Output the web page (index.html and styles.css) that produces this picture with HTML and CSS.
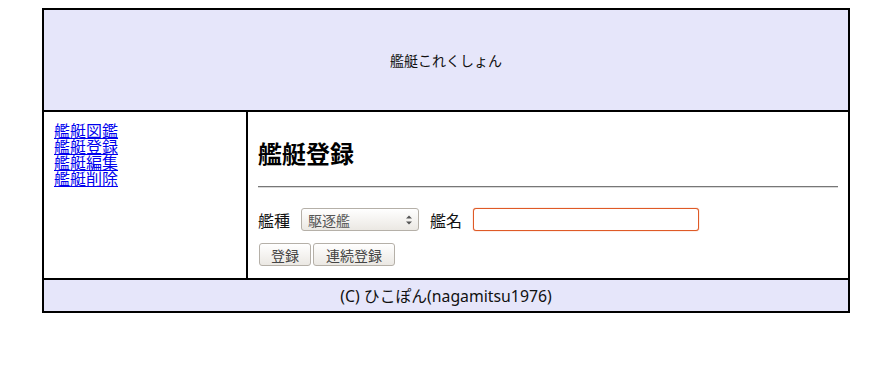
FILE: index.html
```html
<!DOCTYPE html>
<html lang="ja">
<head>
<meta charset="utf-8">
<title>艦艇これくしょん</title>
<link rel="stylesheet" href="styles.css">
</head>
<body>
<div class="page">
  <header class="header">艦艇これくしょん</header>
  <div class="middle">
    <nav class="nav">
      <a href="#">艦艇図鑑</a>
      <a href="#">艦艇登録</a>
      <a href="#">艦艇編集</a>
      <a href="#">艦艇削除</a>
    </nav>
    <main class="main">
      <h2 class="title">艦艇登録</h2>
      <hr class="rule">
      <form class="form">
        <div class="row">
          <label class="label" for="kind">艦種</label>
          <span class="select-wrap">
            <select id="kind" class="select">
              <option>駆逐艦</option>
              <option>軽巡洋艦</option>
              <option>重巡洋艦</option>
              <option>戦艦</option>
              <option>空母</option>
            </select>
            <svg class="arrows" width="8" height="12" viewBox="0 0 8 12"><path d="M1 4.5 L4 1.5 L7 4.5 Z M1 7.5 L4 10.5 L7 7.5 Z" fill="#555"/></svg>
          </span>
          <label class="label" for="name">艦名</label>
          <input id="name" class="input" type="text">
        </div>
        <div class="buttons">
          <button type="button" class="btn btn-1">登録</button>
          <button type="button" class="btn btn-2">連続登録</button>
        </div>
      </form>
    </main>
  </div>
  <footer class="footer">(C) ひこぽん(nagamitsu1976)</footer>
</div>
</body>
</html>
```
FILE: styles.css
```css
html, body {
  margin: 0;
  padding: 0;
  background: #fff;
}
body {
  padding-top: 8px;
  font-family: "Noto Sans CJK JP", "Noto Sans", sans-serif;
  color: #000;
}
.page {
  width: 804px;
  margin: 0 0 0 42px;
  border: 2px solid #000;
}
.header {
  height: 100px;
  background: #e6e6fa;
  border-bottom: 2px solid #000;
  display: flex;
  align-items: center;
  justify-content: center;
  font-size: 14px;
  color: #111;
}
.middle {
  display: flex;
  height: 166px;
  border-bottom: 2px solid #000;
}
.nav {
  width: 204px;
  flex: none;
  border-right: 2px solid #000;
  padding: 10px 10px;
  box-sizing: border-box;
  display: flex;
  flex-direction: column;
  align-items: flex-start;
}
.nav a {
  display: block;
  height: 16px;
  font-size: 16px;
  line-height: 16px;
  color: #0000ee;
  text-decoration: underline;
}
.main {
  width: 600px;
  flex: none;
  box-sizing: border-box;
  padding: 10px 10px;
}
.title {
  font-size: 24px;
  line-height: 30px;
  font-weight: bold;
  margin: 16px 0 18px;
}
.rule {
  margin: 0;
  border: 0;
  border-top: 1px solid #777;
  border-bottom: 1px solid #d8d8d8;
  height: 0;
}
.form {
  margin: 20px 0 0;
}
.row {
  display: flex;
  align-items: center;
  height: 23px;
}
.label {
  font-size: 16px;
  color: #111;
}
.select-wrap {
  position: relative;
  display: inline-block;
  margin: 0 11px 0 11px;
}
.select {
  appearance: none;
  -webkit-appearance: none;
  width: 118px;
  height: 23px;
  box-sizing: border-box;
  border: 1px solid #b5b0a8;
  border-radius: 3px;
  background: linear-gradient(#ffffff, #ebe8e3);
  font-family: "Noto Sans CJK JP", sans-serif;
  font-size: 14px;
  color: #555;
  padding: 0 0 0 6px;
  margin: 0;
  display: block;
}
.arrows {
  position: absolute;
  right: 6px;
  top: 6px;
  pointer-events: none;
}
.input {
  margin-left: 11px;
  width: 226px;
  height: 23px;
  box-sizing: border-box;
  border: 1px solid #df5a26;
  border-radius: 3px;
  box-shadow: 0 0 1px #df5a26;
  background: #fff;
  padding: 0 4px;
  outline: none;
}
.buttons {
  display: flex;
  gap: 2px;
  margin-top: 12px;
}
.btn {
  height: 23px;
  box-sizing: border-box;
  border: 1px solid #b5b0a8;
  border-radius: 3px;
  background: linear-gradient(#ffffff, #ebe8e3);
  font-family: "Noto Sans CJK JP", sans-serif;
  font-size: 14px;
  line-height: 20px;
  color: #444;
  padding: 0;
  margin: 0;
}
.btn-1 {
  width: 52px;
  margin-left: 1px;
}
.btn-2 {
  width: 82px;
}
.footer {
  height: 31px;
  background: #e6e6fa;
  display: flex;
  align-items: center;
  justify-content: center;
  font-family: "Noto Sans", "Noto Sans CJK JP", sans-serif;
  font-size: 15.8px;
  color: #111;
}
```
